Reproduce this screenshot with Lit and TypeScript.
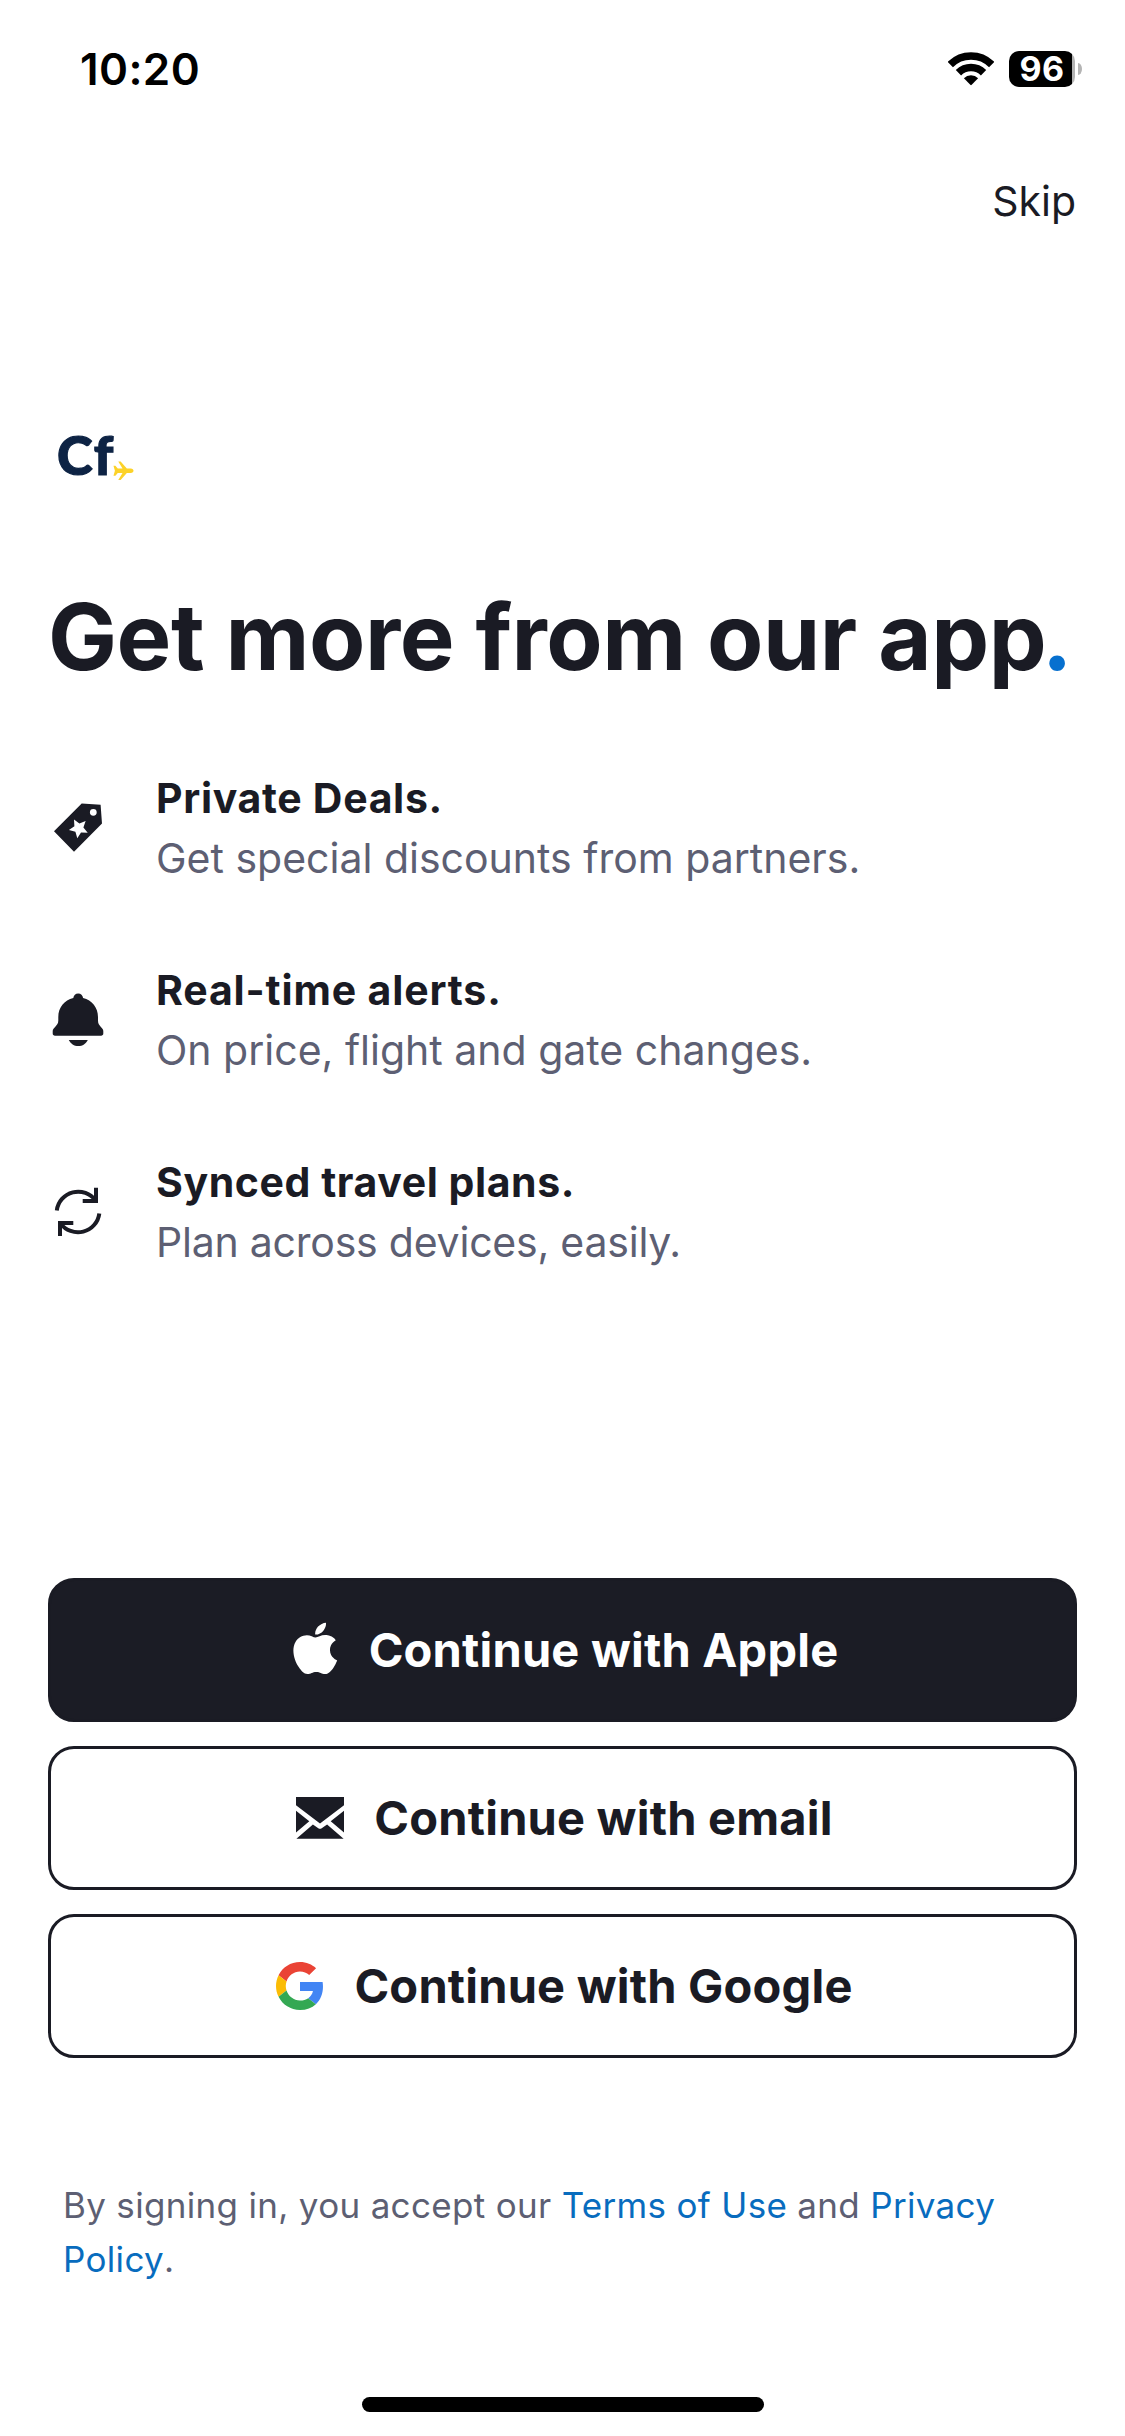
import { LitElement, html, css, svg } from "lit";
import { customElement } from "lit/decorators.js";

const tagIcon = html`<svg class="icon" viewBox="0 0 60 60" fill="currentColor">
  <path fill-rule="evenodd" d="M6 33.2 33.7 5.6 52.6 6.8 54 25.6 26 53.8ZM45.3 10.9a3.4 3.4 0 1 0 0 6.8a3.4 3.4 0 1 0 0-6.8ZM26 21.5 31.4 25.5 37.6 23.1 35.4 29.5 39.7 34.7 33 34.5 29.3 40.2 27.4 33.8 20.9 32 26.4 28.2Z"/>
</svg>`;

const bellIcon = html`<svg class="icon" viewBox="0 0 60 60" fill="currentColor">
  <path d="M30.200 3.400c2.600 0 4.600 1.900 4.900 4.600C44 10.300 50 17.500 50 27v3.600c0 2.800 1 4.400 2.700 6.100 1.700 1.700 2.600 2.800 2.600 4.600v2.200c0 1.400-.9 2.200-2.200 2.200H7c-1.400 0-2.300-.9-2.300-2.200v-2.200c0-1.800.9-2.900 2.600-4.600 1.700-1.700 3-3.300 3-6.100V27c0-9.500 6-16.700 15-19 .3-2.700 2.300-4.600 4.900-4.600Z"/>
  <path d="M20.800 50h19c-1.800 3.800-5.300 6.100-9.500 6.100S22.600 53.800 20.800 50Z"/>
</svg>`;

const syncIcon = html`<svg class="icon" viewBox="0 0 60 60" fill="none" stroke="currentColor" stroke-width="4">
  <path d="M8.800 28.400A21.500 21.500 0 0 1 47.500 18.500M48 5.700V19H34.700"/>
  <path d="M51.300 31.400A21.500 21.500 0 0 1 12.500 41.300M12 54V41H25.300"/>
</svg>`;

const appleIcon = html`<svg class="brand" viewBox="0 0 48 56" fill="currentColor">
  <path transform="translate(-2.600 .7) scale(2.240 2.140)" d="M12.152 6.896c-.948 0-2.415-1.078-3.960-1.040-2.040.027-3.910 1.183-4.961 3.014-2.117 3.675-.546 9.103 1.519 12.090 1.013 1.454 2.208 3.090 3.792 3.039 1.520-.065 2.090-.987 3.935-.987 1.831 0 2.350.987 3.960.948 1.637-.026 2.676-1.480 3.676-2.948 1.156-1.688 1.636-3.325 1.662-3.415-.039-.013-3.182-1.221-3.220-4.857-.026-3.040 2.480-4.494 2.597-4.559-1.429-2.090-3.623-2.324-4.390-2.376-2-.156-3.675 1.090-4.610 1.090zM15.530 3.830c.843-1.012 1.400-2.427 1.245-3.830-1.207.052-2.662.805-3.532 1.818-.780.896-1.454 2.338-1.273 3.714 1.338.104 2.715-.688 3.559-1.701"/>
</svg>`;

const mailIcon = html`<svg class="brand" viewBox="0 -7 48 56" fill="currentColor">
  <path d="M0 0H48V8.200L24 26.400 0 8.200ZM0 13.800 13.300 24.300 0 35.600ZM48 13.800V35.600L34.700 24.300ZM.4 41.700 16.900 27.400 22.300 31.200Q24 32.300 25.700 31.200L31.100 27.400 47.600 41.700Z"/>
</svg>`;

const googleIcon = html`<svg class="brand" viewBox="0 -4 48 56">
  <path fill="#ea4335" d="M24 9.500c3.540 0 6.710 1.220 9.210 3.600l6.850-6.850C35.900 2.380 30.470 0 24 0 14.620 0 6.510 5.380 2.560 13.220l7.980 6.190C12.430 13.720 17.740 9.500 24 9.500z"/>
  <path fill="#4285f4" d="M46.980 24.550c0-1.570-.150-3.090-.380-4.550H24v9.020h12.940c-.580 2.960-2.260 5.480-4.780 7.180l7.730 6c4.510-4.180 7.090-10.360 7.090-17.650z"/>
  <path fill="#fbbc05" d="M10.530 28.590c-.480-1.450-.760-2.990-.760-4.590s.270-3.140.760-4.590l-7.980-6.190C.920 16.460 0 20.120 0 24c0 3.880.920 7.540 2.560 10.780l7.970-6.190z"/>
  <path fill="#34a853" d="M24 48c6.480 0 11.930-2.130 15.890-5.810l-7.730-6c-2.150 1.450-4.920 2.300-8.160 2.300-6.260 0-11.570-4.220-13.470-9.910l-7.980 6.190C6.510 42.620 14.620 48 24 48z"/>
</svg>`;

const features = [
  { icon: tagIcon, title: "Private Deals.", text: "Get special discounts from partners." },
  { icon: bellIcon, title: "Real-time alerts.", text: "On price, flight and gate changes." },
  { icon: syncIcon, title: "Synced travel plans.", text: "Plan across devices, easily." },
];

const providers = [
  { kind: "apple", icon: appleIcon, label: "Continue with Apple" },
  { kind: "email", icon: mailIcon, label: "Continue with email" },
  { kind: "google", icon: googleIcon, label: "Continue with Google" },
];

@customElement("app-root")
class AppRoot extends LitElement {
  static styles = css`
    :host {
      display: block;
      font-family: Inter, "Liberation Sans", sans-serif;
      color: #1a1b24;
    }
    .screen {
      box-sizing: border-box;
      height: 2436px;
      display: flex;
      flex-direction: column;
      background: #fff;
      overflow: hidden;
    }
    .status {
      display: flex;
      justify-content: space-between;
      align-items: flex-start;
      padding: 42px 43px 0 80px;
      height: 55px;
      color: #000;
    }
    .time {
      font-size: 44px;
      font-weight: 600;
      line-height: 54px;
      letter-spacing: 0.4px;
    }
    .indicators {
      display: flex;
      align-items: center;
      margin-top: 9px;
      height: 36px;
    }
    .wifi {
      width: 46px;
      height: 34px;
      margin-right: 15px;
    }
    .battery {
      width: 66px;
      height: 36px;
      border-radius: 10px;
      background: linear-gradient(90deg, #000 63.5px, #b4b4b4 63.5px);
      color: #fff;
      font-size: 34px;
      font-weight: 700;
      line-height: 36px;
      text-align: center;
      letter-spacing: 0.5px;
    }
    .tip {
      width: 4px;
      height: 12px;
      margin-left: 3px;
      border-radius: 0 4px 4px 0 / 0 6px 6px 0;
      background: #b4b4b4;
    }
    .nav {
      display: flex;
      justify-content: flex-end;
      padding: 78px 49px 0;
    }
    .skip {
      font-size: 41px;
      line-height: 52px;
    }
    .logo {
      display: flex;
      align-items: flex-start;
      margin: 196px 0 0 57px;
      height: 63px;
      font-family: Lato, "Liberation Sans", sans-serif;
      font-size: 54px;
      font-weight: 900;
      line-height: 63px;
      letter-spacing: 2px;
      color: #0d2344;
      -webkit-text-stroke: 1.2px #0d2344;
    }
    .plane {
      width: 21px;
      height: 20px;
      margin: 38px 0 0 -2px;
    }
    h1 {
      margin: 95px 0 0 48px;
      font-size: 92px;
      font-weight: 700;
      line-height: 112px;
      letter-spacing: -0.46px;
      white-space: nowrap;
    }
    .dot {
      margin-left: -4.5px;
      color: #0770cf;
    }
    .features {
      display: flex;
      flex-direction: column;
      gap: 72px;
      margin: 75px 48px 0;
    }
    .feature {
      display: flex;
      align-items: center;
      gap: 48px;
      font-size: 41px;
      line-height: 60px;
      white-space: nowrap;
    }
    .icon {
      width: 60px;
      height: 60px;
    }
    .title {
      font-weight: 700;
      letter-spacing: 0.68px;
    }
    .feature:nth-child(2) .title {
      letter-spacing: 0.85px;
    }
    .text {
      color: #5d5f73;
    }
    .feature:nth-child(3) .title {
      letter-spacing: 0.58px;
    }
    .feature:nth-child(3) .text {
      letter-spacing: -0.22px;
    }
    .actions {
      display: flex;
      flex-direction: column;
      gap: 24px;
      margin: 306px 48px 0;
    }
    .button {
      box-sizing: border-box;
      display: flex;
      align-items: center;
      justify-content: center;
      gap: 30px;
      height: 144px;
      padding: 0 0 0 4px;
      border: 3px solid #1a1b24;
      border-radius: 26px;
      background: #fff;
      color: inherit;
      font: 700 47px/58px Inter, "Liberation Sans", sans-serif;
      letter-spacing: 0.2px;
      white-space: nowrap;
    }
    .apple {
      background: #1b1c25;
      color: #fff;
    }
    .brand {
      width: 48px;
      height: 56px;
    }
    .legal {
      margin: 120px 63px 0;
      font-size: 35px;
      line-height: 54px;
      letter-spacing: 0.32px;
      color: #5d5f73;
    }
    .line {
      display: flex;
      white-space: pre;
    }
    .link {
      color: #086cbe;
    }
    .home {
      width: 402px;
      height: 15px;
      margin: 111px auto 0;
      border-radius: 8px;
      background: #000;
    }
  `;

  render() {
    return html`
      <div class="screen">
        <div class="status">
          <span class="time">10:20</span>
          <div class="indicators">
            <svg class="wifi" viewBox="0 0 46 34">
              ${svg`<g fill="none" stroke="#000" stroke-width="7.500">
                <path d="M2.300 12.600A29.250 29.250 0 0 1 43.700 12.600"/>
                <path d="M10.450 20.750A17.750 17.750 0 0 1 35.550 20.750"/>
              </g>
              <path d="M15.900 26.200A10 10 0 0 1 30.100 26.200L23.700 32.800Q23 33.500 22.300 32.800Z"/>`}
            </svg>
            <span class="battery">96</span>
            <span class="tip"></span>
          </div>
        </div>
        <div class="nav"><span class="skip">Skip</span></div>
        <div class="logo">
          <span>Cf</span>
          <svg class="plane" viewBox="0 0 22 20" fill="#fcd228">
            <path d="M.5 4.500h2l2.500 3h5L5.500 0h2.500l6.500 7.500h4c2 0 3 1.200 3 2.300s-1 2.200-3 2.200h-4L8 19.500H5.500L10 12H5l-2.500 3H.5L2 9.800Z"/>
          </svg>
        </div>
        <h1>Get more from our app<span class="dot">.</span></h1>
        <div class="features">
          ${features.map(
            (f) => html`<div class="feature">
              ${f.icon}
              <div>
                <div class="title">${f.title}</div>
                <div class="text">${f.text}</div>
              </div>
            </div>`
          )}
        </div>
        <div class="actions">
          ${providers.map(
            (p) => html`<button class="button ${p.kind}">${p.icon}<span>${p.label}</span></button>`
          )}
        </div>
        <div class="legal">
          <div class="line"><span>By signing in, you accept our </span><span class="link">Terms of Use</span><span> and </span><span class="link">Privacy</span></div>
          <div class="line"><span class="link">Policy</span><span>.</span></div>
        </div>
        <div class="home"></div>
      </div>
    `;
  }
}
